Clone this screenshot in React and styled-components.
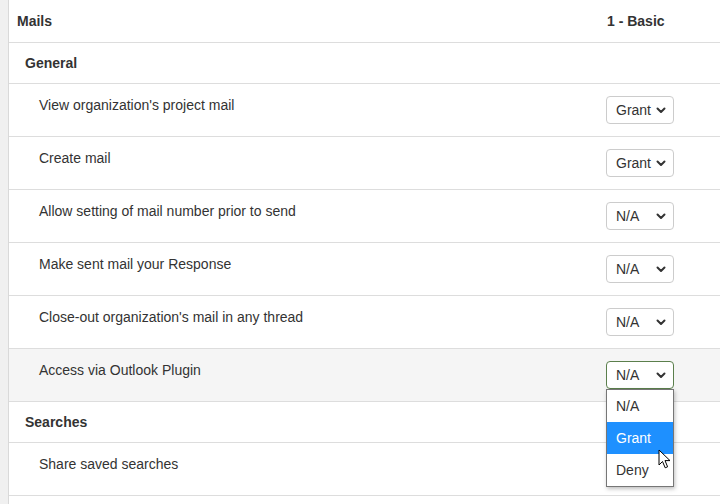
import React from 'react';
import styled, { createGlobalStyle } from 'styled-components';

const GlobalStyle = createGlobalStyle`
  html, body {
    margin: 0;
    padding: 0;
    background: #fff;
    font-family: "Liberation Sans", Arial, sans-serif;
    font-size: 14px;
    color: #333;
  }
`;

const permissions = [
  { label: "View organization's project mail", value: 'Grant' },
  { label: 'Create mail', value: 'Grant' },
  { label: 'Allow setting of mail number prior to send', value: 'N/A' },
  { label: 'Make sent mail your Response', value: 'N/A' },
  { label: "Close-out organization's mail in any thread", value: 'N/A' },
  { label: 'Access via Outlook Plugin', value: 'N/A', open: true },
];

const options = ['N/A', 'Grant', 'Deny'];

function Chevron() {
  return (
    <ChevronIcon width="10" height="7" viewBox="0 0 10 7">
      <path d="M1.5 1.5 L5 5 L8.5 1.5" fill="none" stroke="#333" strokeWidth="2" strokeLinecap="round" strokeLinejoin="round" />
    </ChevronIcon>
  );
}

function Cursor() {
  return (
    <CursorIcon width="14" height="21" viewBox="0 0 14 21">
      <path d="M1 1 L1 16 L4.5 12.5 L7.2 18.8 L9.6 17.8 L7 11.6 L12 11.6 Z" fill="#fff" stroke="#000" strokeWidth="1" strokeLinejoin="round" />
    </CursorIcon>
  );
}

function PermissionSelect({ value, open }) {
  return (
    <SelectWrap>
      <SelectBox open={open}>
        <SelectText>{value}</SelectText>
        <Chevron />
      </SelectBox>
      {open && (
        <Listbox>
          {options.map((o) => (
            <Option key={o} active={o === 'Grant'}>{o}</Option>
          ))}
          <Cursor />
        </Listbox>
      )}
    </SelectWrap>
  );
}

export default function App() {
  return (
    <>
      <GlobalStyle />
      <Page>
        <SideStrip />
        <Table>
          <HeaderRow>
            <HeaderCell>Mails</HeaderCell>
            <HeaderCell>1 - Basic</HeaderCell>
          </HeaderRow>
          <GroupRow>
            <GroupCell>General</GroupCell>
            <div />
          </GroupRow>
          {permissions.map((p) => (
            <ItemRow key={p.label} highlight={p.open}>
              <ItemLabel>{p.label}</ItemLabel>
              <ValueCell>
                <PermissionSelect value={p.value} open={p.open} />
              </ValueCell>
            </ItemRow>
          ))}
          <GroupRow>
            <GroupCell>Searches</GroupCell>
            <div />
          </GroupRow>
          <ItemRow>
            <ItemLabel>Share saved searches</ItemLabel>
            <ValueCell />
          </ItemRow>
        </Table>
      </Page>
    </>
  );
}

const Page = styled.div`
  display: flex;
  width: 720px;
  height: 504px;
  overflow: hidden;
`;

const SideStrip = styled.div`
  flex: 0 0 8px;
  background: #f0f0f0;
  border-right: 1px solid #d9d9d9;
`;

const Table = styled.div`
  flex: 1;
  display: flex;
  flex-direction: column;
`;

const Row = styled.div`
  display: grid;
  grid-template-columns: 1fr 114px;
  border-bottom: 1px solid #dddddd;
`;

const HeaderRow = styled(Row)`
  height: 42px;
  align-items: center;
`;

const HeaderCell = styled.div`
  font-weight: bold;
  padding-left: 8px;
  &:last-child {
    padding-left: 1px;
  }
`;

const GroupRow = styled(Row)`
  height: 40px;
  align-items: center;
`;

const GroupCell = styled.div`
  font-weight: bold;
  padding-left: 16px;
`;

const ItemRow = styled(Row)`
  height: 52px;
  background: ${(p) => (p.highlight ? '#f5f5f5' : '#fff')};
`;

const ItemLabel = styled.div`
  padding: 12px 0 0 30px;
  line-height: 18px;
`;

const ValueCell = styled.div`
  padding-top: 12px;
`;

const SelectWrap = styled.div`
  position: relative;
  width: 68px;
`;

const SelectBox = styled.div`
  box-sizing: border-box;
  display: flex;
  align-items: center;
  height: 28px;
  padding: 0 7px 0 9px;
  background: #fff;
  border: 1px solid ${(p) => (p.open ? '#5b7f4c' : '#cccccc')};
  border-radius: 4px;
  font-size: 14px;
  color: #333;
`;

const SelectText = styled.span`
  flex: 1;
  min-width: 0;
  white-space: nowrap;
`;

const ChevronIcon = styled.svg`
  flex: 0 0 10px;
`;

const Listbox = styled.div`
  position: absolute;
  top: 28px;
  left: 0;
  width: 68px;
  box-sizing: border-box;
  background: #fff;
  border: 1px solid #767676;
  box-shadow: 1px 2px 4px rgba(0, 0, 0, 0.25);
  z-index: 3;
`;

const Option = styled.div`
  height: 32px;
  line-height: 32px;
  padding-left: 9px;
  background: ${(p) => (p.active ? '#1e90ff' : '#fff')};
  color: ${(p) => (p.active ? '#fff' : '#333')};
`;

const CursorIcon = styled.svg`
  position: absolute;
  left: 51px;
  top: 59px;
`;
